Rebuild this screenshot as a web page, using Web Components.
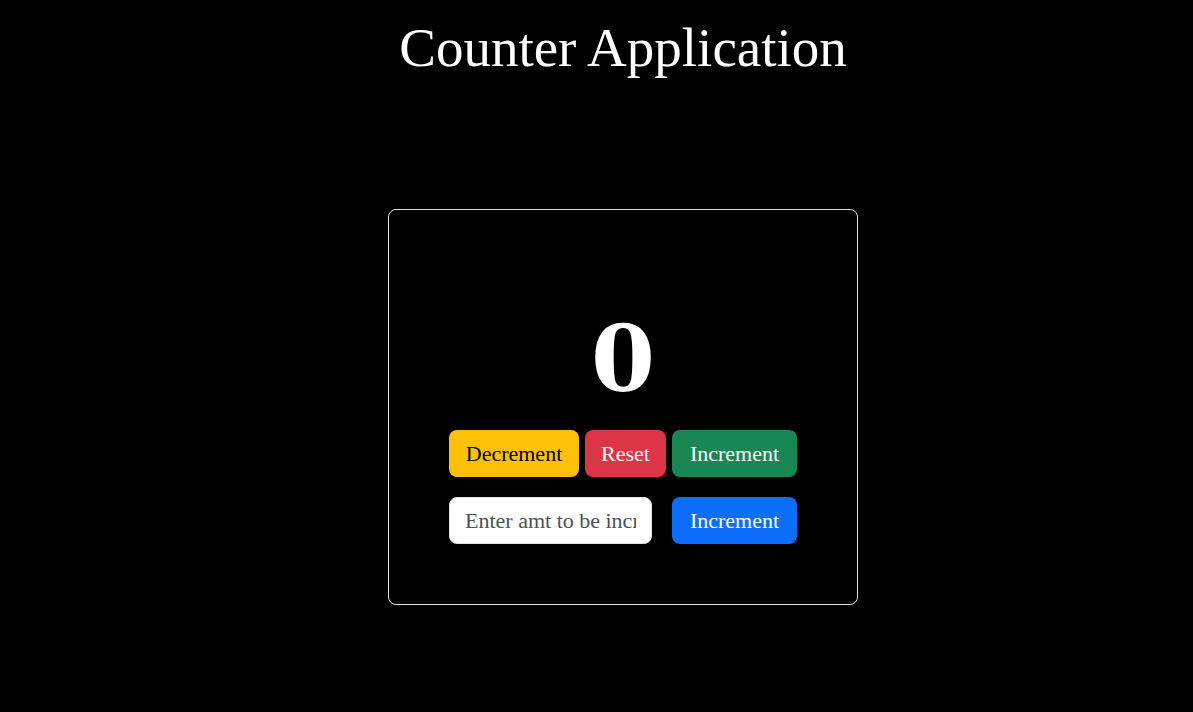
<!DOCTYPE html>
<html lang="en">
<head>
<meta charset="utf-8">
<meta name="viewport" content="width=device-width, initial-scale=1">
<title>Counter Application</title>
<style>
  body { margin: 0; background: #000; color: #fff; font-family: Georgia, "Liberation Serif", serif; }
</style>
</head>
<body>
<counter-app></counter-app>
<script>
class AppButton extends HTMLElement {
  constructor() {
    super();
    this.attachShadow({ mode: "open" }).innerHTML = `
      <style>
        :host { display: block; --fill: #0d6efd; --ink: #fff; }
        :host([variant="warning"]) { --fill: #ffc107; --ink: #000; }
        :host([variant="danger"]) { --fill: #dc3545; }
        :host([variant="success"]) { --fill: #198754; }
        button { box-sizing: border-box; width: 100%; height: 47px; padding: 0; border: 0; border-radius: 8px;
          background: var(--fill); color: var(--ink); font: inherit; font-size: 22px; line-height: 30px; cursor: pointer; }
      </style>
      <button type="button"><slot></slot></button>`;
  }
}
customElements.define("app-button", AppButton);

class CounterCard extends HTMLElement {
  constructor() {
    super();
    this.attachShadow({ mode: "open" }).innerHTML = `
      <style>
        :host { display: block; box-sizing: border-box; width: 100%; max-width: 470px; padding: 60px; border: 1px solid #dee2e6; border-radius: 8px; }
        output { display: block; height: 160px; font-family: Georgia, "DejaVu Serif", serif; font-size: 92px; font-weight: 700; line-height: 178px; text-align: center; }
        .row { display: grid; grid-template-columns: 130fr 81fr 125fr; gap: 6px; }
        .amount { display: grid; grid-template-columns: 203fr 125fr; gap: 20px; margin-top: 20px; }
        input { box-sizing: border-box; width: 100%; min-width: 0; height: 47px; padding: 0 15px; border: 1px solid #dee2e6; border-radius: 8px;
          background: #fff; color: #212529; font: inherit; font-size: 22px; }
        input::placeholder { color: #4d5154; opacity: 1; }
      </style>
      <output aria-label="Count">0</output>
      <div class="row">
        <app-button id="dec" variant="warning">Decrement</app-button>
        <app-button id="reset" variant="danger">Reset</app-button>
        <app-button id="inc" variant="success">Increment</app-button>
      </div>
      <div class="amount">
        <input type="text" inputmode="numeric" aria-label="Amount to be incremented" placeholder="Enter amt to be incremented">
        <app-button id="add">Increment</app-button>
      </div>`;
    const root = this.shadowRoot;
    const out = root.querySelector("output");
    const on = (id, next) => root.getElementById(id).addEventListener("click", () => { out.textContent = next(Number(out.textContent)); });
    on("dec", n => n - 1);
    on("reset", () => 0);
    on("inc", n => n + 1);
    on("add", n => n + (Number(root.querySelector("input").value) || 0));
  }
}
customElements.define("counter-card", CounterCard);

class CounterApp extends HTMLElement {
  constructor() {
    super();
    this.attachShadow({ mode: "open" }).innerHTML = `
      <style>
        :host { display: flex; flex-direction: column; align-items: center; padding: 19px 0 20px 53px; }
        h1 { margin: 0 0 132px; font-size: 55px; line-height: 58px; font-weight: 400; text-align: center; }
      </style>
      <h1>Counter Application</h1>
      <counter-card></counter-card>`;
  }
}
customElements.define("counter-app", CounterApp);
</script>
</body>
</html>
